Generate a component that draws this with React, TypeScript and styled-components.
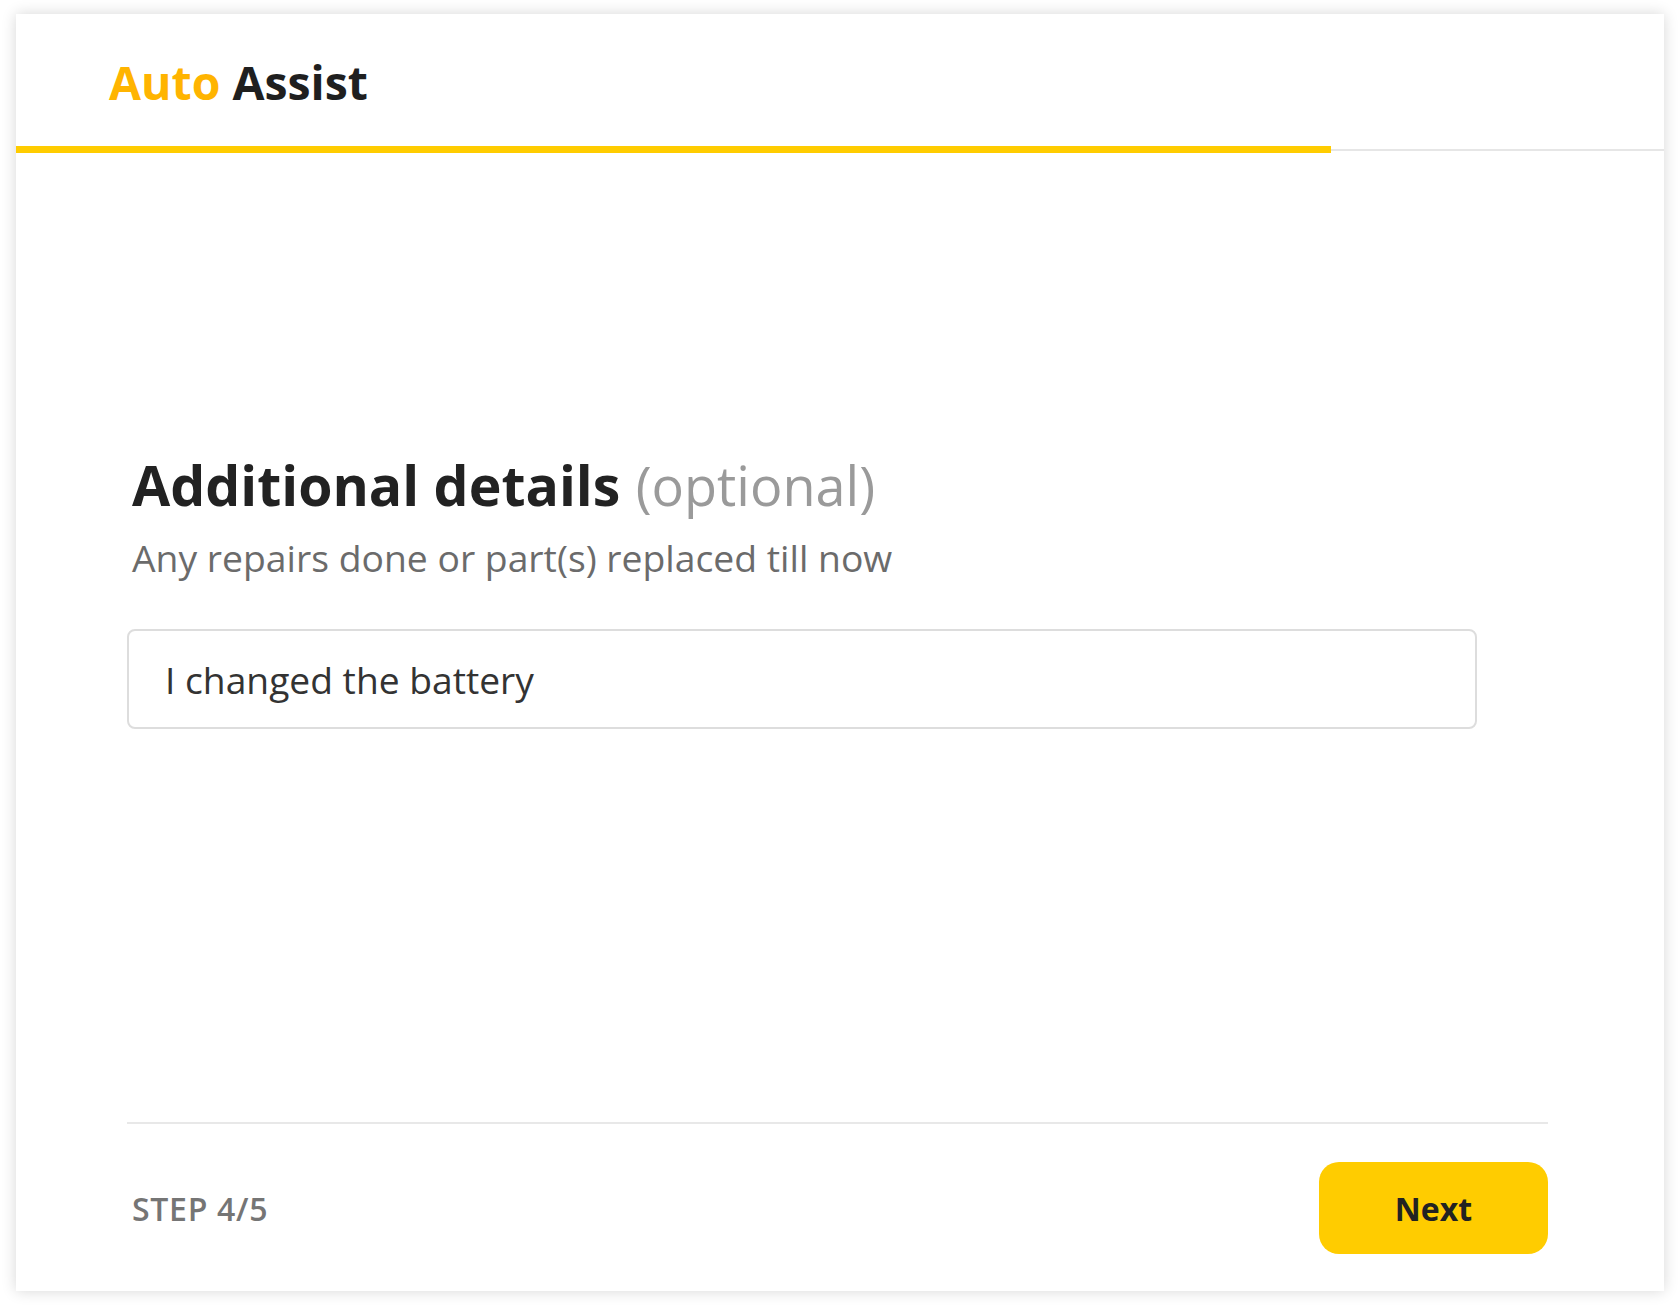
import React from "react";
import styled, { createGlobalStyle } from "styled-components";

const GlobalStyle = createGlobalStyle`
  * { box-sizing: border-box; }
  html, body {
    margin: 0;
    padding: 0;
    background: #ffffff;
    font-family: "Open Sans", "Noto Sans", Arial, sans-serif;
  }
`;

const Page = styled.div`
  width: 1680px;
  height: 1310px;
  padding: 14px 16px 19px 16px;
`;

const Card = styled.div`
  width: 1648px;
  height: 1277px;
  background: #ffffff;
  box-shadow: 0 0 14px rgba(0, 0, 0, 0.16);
  display: flex;
  flex-direction: column;
`;

const Header = styled.header`
  height: 132px;
  padding-left: 93px;
  display: flex;
  align-items: center;
  padding-top: 4px;
`;

const Logo = styled.div`
  font-size: 46.4px;
  font-weight: 700;
  color: #1f1f1f;
`;

const LogoAccent = styled.span`
  color: #ffb400;
`;

const Progress = styled.div`
  height: 7px;
  display: flex;
  align-items: center;
`;

const ProgressFill = styled.div`
  height: 7px;
  background: #ffcc00;
`;

const ProgressRest = styled.div`
  flex: 1;
  height: 2px;
  background: #e6e6e6;
`;

const Body = styled.main`
  flex: 1;
  display: flex;
  flex-direction: column;
  padding: 0 116px 0 111px;
`;

const Content = styled.section`
  flex: 1;
  padding-top: 299px;
  display: flex;
  flex-direction: column;
  align-items: flex-start;
`;

const Title = styled.h1`
  margin: 0;
  padding-left: 5px;
  font-size: 55.4px;
  line-height: 65px;
  font-weight: 700;
  color: #222222;
`;

const Optional = styled.span`
  font-size: 54px;
  font-weight: 400;
  color: #9a9a9a;
  margin-left: 1px;
`;

const Subtitle = styled.p`
  margin: 16px 0 0 0;
  padding-left: 5px;
  font-size: 37.3px;
  line-height: 48px;
  color: #6b6b6b;
`;

const TextInput = styled.input`
  margin-top: 47px;
  width: 1350px;
  height: 100px;
  border: 2px solid #dddddd;
  border-radius: 8px;
  padding: 0 36px;
  font-family: inherit;
  font-size: 37.2px;
  color: #333333;
  background: #ffffff;
  outline: none;
`;

const Footer = styled.footer`
  border-top: 2px solid #e8e8e8;
  padding: 38px 0 37px 0;
  display: flex;
  align-items: center;
  justify-content: space-between;
`;

const StepLabel = styled.div`
  font-size: 32px;
  font-weight: 600;
  color: #757575;
  padding-left: 5px;
  letter-spacing: 0.7px;
`;

const NextButton = styled.button`
  width: 229px;
  height: 92px;
  border: none;
  border-radius: 20px;
  background: #ffcc00;
  color: #222222;
  font-family: inherit;
  font-size: 32px;
  font-weight: 700;
  cursor: pointer;
`;

export default function App() {
  const step = 4;
  const total = 5;
  return (
    <>
      <GlobalStyle />
      <Page>
        <Card>
          <Header>
            <Logo>
              <LogoAccent>Auto</LogoAccent> Assist
            </Logo>
          </Header>
          <Progress>
            <ProgressFill style={{ width: `${(step / total) * 100 - 0.2}%` }} />
            <ProgressRest />
          </Progress>
          <Body>
            <Content>
              <Title>
                Additional details <Optional>(optional)</Optional>
              </Title>
              <Subtitle>Any repairs done or part(s) replaced till now</Subtitle>
              <TextInput defaultValue="I changed the battery" />
            </Content>
            <Footer>
              <StepLabel>
                STEP {step}/{total}
              </StepLabel>
              <NextButton>Next</NextButton>
            </Footer>
          </Body>
        </Card>
      </Page>
    </>
  );
}
